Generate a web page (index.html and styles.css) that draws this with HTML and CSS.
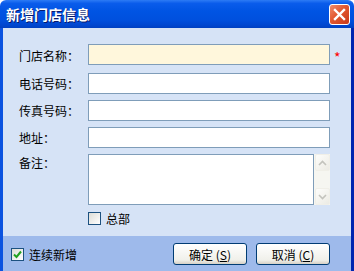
FILE: index.html
```
<!DOCTYPE html>
<html lang="zh-CN">
<head>
    <meta charset="UTF-8">
    <title>新增门店信息</title>
    <link rel="stylesheet" href="styles.css">
</head>
<body>

<div class="window">
    <div class="titlebar">
        <span class="title">新增门店信息</span>
        <div class="close-btn">
            <svg width="13" height="13" viewBox="0 0 13 13">
                <path d="M2 2 L11 11 M11 2 L2 11" stroke="#fff" stroke-width="2.4" stroke-linecap="square"/>
            </svg>
        </div>
    </div>

    <div class="main">
        <div class="form">
            <label class="lbl">门店名称：</label>
            <input type="text" class="field required-field">
            <span class="star">*</span>

            <label class="lbl">电话号码：</label>
            <input type="text" class="field">
            <span></span>

            <label class="lbl">传真号码：</label>
            <input type="text" class="field">
            <span></span>

            <label class="lbl">地址：</label>
            <input type="text" class="field">
            <span></span>

            <label class="lbl lbl-top">备注：</label>
            <div class="memo">
                <div class="memo-text"></div>
                <div class="scrollbar">
                    <div class="sb-btn">
                        <svg width="9" height="6" viewBox="0 0 9 6"><path d="M1 5 L4.5 1.5 L8 5" fill="none" stroke="#c3c3bd" stroke-width="1.6"/></svg>
                    </div>
                    <div class="sb-btn">
                        <svg width="9" height="6" viewBox="0 0 9 6"><path d="M1 1 L4.5 4.5 L8 1" fill="none" stroke="#c3c3bd" stroke-width="1.6"/></svg>
                    </div>
                </div>
            </div>
            <span></span>

            <span></span>
            <div class="check-row">
                <span class="checkbox"></span>
                <span>总部</span>
            </div>
            <span></span>
        </div>
    </div>

    <div class="footer">
        <div class="check-row">
            <span class="checkbox">
                <svg width="9" height="9" viewBox="0 0 9 9"><path d="M1 4.5 L3.5 7 L8 1.5" fill="none" stroke="#21a121" stroke-width="2"/></svg>
            </span>
            <span>连续新增</span>
        </div>
        <div class="buttons">
            <button class="btn">确定 (<u>S</u>)</button>
            <button class="btn">取消 (<u>C</u>)</button>
        </div>
    </div>
</div>

</body>
</html>
```

FILE: styles.css
```
body {
    margin: 0;
    padding: 0;
    font-family: "Noto Sans CJK SC", "Liberation Sans", sans-serif;
    font-size: 12px;
    color: #000;
}

.window {
    width: 354px;
    height: 271px;
    display: flex;
    flex-direction: column;
    overflow: hidden;
}

.titlebar {
    height: 28px;
    display: flex;
    align-items: center;
    padding-left: 6px;
    background: linear-gradient(#2d7bf5 0%, #0a5ceb 12%, #0054e3 40%, #0050de 70%, #0046cf 90%, #0040c0 100%);
    border-radius: 6px 6px 0 0;
}

.title {
    color: #fff;
    font-size: 14px;
    font-weight: bold;
    text-shadow: 1px 1px 0 #0a1a6a;
}

.close-btn {
    margin-left: auto;
    margin-right: 4px;
    width: 19px;
    height: 19px;
    border: 1px solid #fff;
    border-radius: 3px;
    background: linear-gradient(135deg, #f08c6c 0%, #e2572f 45%, #c8391a 100%);
    display: flex;
    align-items: center;
    justify-content: center;
}

.main {
    flex: 1;
    background-color: #d6e3f6;
    border-left: 3px solid #0b53e0;
    border-right: 3px solid #0025b0;
    padding-top: 16px;
}

.form {
    display: grid;
    grid-template-columns: 69px 242px 20px;
    row-gap: 6px;
    padding-left: 16px;
}

.lbl {
    display: flex;
    align-items: center;
}

.lbl-top {
    align-items: flex-start;
}

.field {
    height: 21px;
    box-sizing: border-box;
    border: 1px solid #7f9db9;
    background-color: #fff;
    margin: 0;
    padding: 0 3px;
    font-family: inherit;
    font-size: 12px;
    outline: none;
}

.required-field {
    background-color: #fff7dc;
}

.star {
    color: #f00;
    font-size: 14px;
    display: flex;
    align-items: center;
    padding-left: 4px;
    padding-top: 3px;
}

.memo {
    height: 51px;
    display: flex;
}

.memo-text {
    flex: 1;
    border: 1px solid #7f9db9;
    background-color: #fff;
}

.scrollbar {
    width: 16px;
    background-color: #f6f6f1;
    display: flex;
    flex-direction: column;
    justify-content: space-between;
    align-items: center;
}

.sb-btn {
    width: 15px;
    height: 17px;
    box-sizing: border-box;
    border: 1px solid #f0efe8;
    border-radius: 2px;
    background: linear-gradient(135deg, #fdfdfb, #ecebe4);
    display: flex;
    align-items: center;
    justify-content: center;
}

.check-row {
    display: flex;
    align-items: center;
    gap: 5px;
}

.checkbox {
    width: 13px;
    height: 13px;
    box-sizing: border-box;
    border: 1px solid #1c5180;
    background: linear-gradient(135deg, #dcdcd6, #fff);
    display: flex;
    align-items: center;
    justify-content: center;
}

.form .check-row {
    margin-top: -1px;
}

.footer {
    height: 35px;
    background-color: #9ebaeb;
    border-left: 3px solid #0b53e0;
    border-right: 3px solid #0025b0;
    display: flex;
    align-items: center;
    padding-left: 8px;
    padding-top: 1px;
    box-sizing: border-box;
}

.buttons {
    margin-left: auto;
    margin-right: 21px;
    display: flex;
    gap: 9px;
}

.btn {
    width: 74px;
    height: 22px;
    border: 1px solid #003c74;
    border-radius: 3px;
    background: linear-gradient(#ffffff, #f0f0ea 80%, #d6d0c5);
    font-family: inherit;
    font-size: 12px;
    padding: 0;
    color: #000;
}
```
